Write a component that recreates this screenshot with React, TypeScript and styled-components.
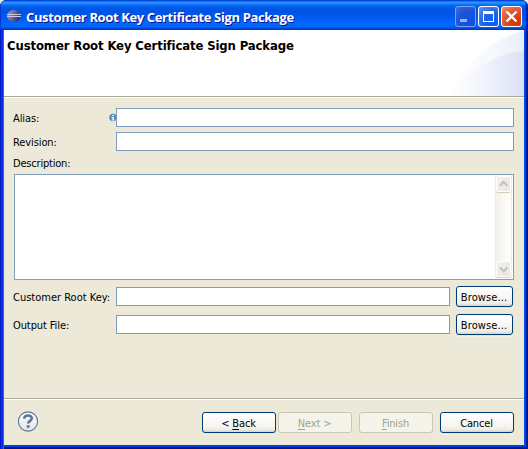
import React from "react";
import styled, { createGlobalStyle } from "styled-components";

const GlobalStyle = createGlobalStyle`
  * { box-sizing: border-box; }
  body { margin: 0; background: #ece9d8; overflow: hidden; }
  button, input, textarea { font: inherit; margin: 0; }
`;

const Window = styled.div`
  display: flex;
  flex-direction: column;
  width: 528px;
  height: 449px;
  padding: 0 4px 4px;
  border-radius: 7px 7px 0 0;
  overflow: hidden;
  background: #0046e0;
  box-shadow: inset 1px 0 #0019cf, inset 3px 0 #0831d9, inset 4px 0 #166aee,
    inset -1px 0 #00138c, inset -2px 0 #001ea0, inset 0 -1px #00138c,
    inset 0 -2px #001ea0, inset 0 -4px #0441d8;
  font: 11px/14px "DejaVu Sans Condensed", "DejaVu Sans", sans-serif;
  font-stretch: condensed;
  color: #000;
`;

const TitleBar = styled.header`
  display: flex;
  flex: none;
  align-items: flex-start;
  height: 30px;
  margin: 0 -4px;
  padding: 6px 6px 0 6px;
  background: linear-gradient(
    #0058ee 0, #0058ee 1px, #3593ff 2px, #288eff 3px, #127dff 4px, #036ffc 5px,
    #0262ee 6px, #0057e5 8px, #0054e3 11px, #0055eb 15px, #005bf5 19px,
    #026afe 23px, #0062fd 27px, #0052dc 28px, #0040c8 30px
  );
  box-shadow: inset 1px 0 #0637d4, inset -2px 0 2px #0019a8;
`;

const TitleText = styled.h1`
  flex: 1;
  margin: 1px 0 0 4px;
  font: bold 13px/20px "Open Sans", "Noto Sans", sans-serif;
  letter-spacing: -0.37px;
  white-space: nowrap;
  color: #fff;
  text-shadow: 1px 1px 0 #0f1089;
`;

const WindowControls = styled.div`
  display: flex;
  gap: 2px;
`;

const ControlButton = styled.button<{ $tone: "dim" | "blue" | "red" }>`
  width: 21px;
  height: 21px;
  padding: 0;
  border: 1px solid ${(p) => (p.$tone === "dim" ? "#7f9eea" : "#fff")};
  border-radius: 3px;
  background: ${(p) =>
    p.$tone === "red"
      ? "radial-gradient(circle at 80% 85%, #d63300, #e04b22 50%, #ef8e73)"
      : p.$tone === "dim"
        ? "radial-gradient(circle at 75% 80%, #0c54e4, #1c52da 55%, #426fdf)"
        : "radial-gradient(circle at 80% 85%, #0560f8, #2362e4 50%, #6494f2)"};
  svg { display: block; }
`;

const Banner = styled.section`
  display: flex;
  flex: none;
  justify-content: space-between;
  height: 68px;
  border-bottom: 1px solid #fff;
  background: #fff;
  box-shadow: inset 0 -1px #aca899;
`;

const BannerTitle = styled.h2`
  margin: 8px 0 0 3px;
  font: bold 13px/16px "DejaVu Sans Condensed", "DejaVu Sans", sans-serif;
  font-stretch: condensed;
  letter-spacing: -0.13px;
  white-space: nowrap;
`;

const Form = styled.main`
  flex: 1;
  padding: 10px 10px 0 9px;
  background: #ece9d8;
`;

const Field = styled.div<{ $height: number }>`
  display: flex;
  align-items: center;
  height: ${(p) => p.$height}px;
`;

const Label = styled.label<{ $spacing?: number }>`
  flex: none;
  width: 103px;
  padding-top: 2px;
  letter-spacing: ${(p) => p.$spacing ?? 0}px;
  white-space: nowrap;
`;

const AliasLabel = styled(Label)`
  display: flex;
  justify-content: space-between;
  svg { flex: none; margin: 1px -1px 0 0; }
`;

const DescriptionLabel = styled(Label)`
  padding: 0 0 3px;
`;

const TextInput = styled.input`
  flex: 1;
  min-width: 0;
  height: 19px;
  padding: 1px 3px;
  border: 1px solid #7f9db9;
  border-radius: 0;
  background: #fff;
  outline: none;
`;

const TextArea = styled.div`
  display: flex;
  justify-content: flex-end;
  height: 106px;
  margin: 0 0 6px 1px;
  padding: 1px;
  border: 1px solid #7f9db9;
  background: #fff;
`;

const ScrollBar = styled.div`
  display: flex;
  flex-direction: column;
  justify-content: space-between;
  width: 17px;
  border: solid #eeede5;
  border-width: 0 1px;
  background: linear-gradient(90deg, #f3f1ec, #fefefb);
`;

const ScrollButton = styled.div`
  height: 16px;
  margin: 0 0 1px;
  border: 1px solid #fff;
  border-radius: 2px;
  background: linear-gradient(135deg, #f3f2ec, #e8e6dc);
  box-shadow: 0 1px #d2cebb;
  svg { display: block; }
`;

const PushButton = styled.button<{ $width: number }>`
  flex: none;
  width: ${(p) => p.$width}px;
  height: 21px;
  padding: 1px 1px 0 0;
  border: 1px solid #003c74;
  border-radius: 3px;
  background: linear-gradient(#fff, #f5f4ee 70%, #ecebe5 88%, #d8d0c4);
  box-shadow: 0 0 0 1px #e9e4d2, 0 1px 0 1px #f3f1e7;
  line-height: 17px;
  letter-spacing: -0.15px;
  color: #000;
  white-space: nowrap;
  &:disabled {
    border-color: #c9c7ba;
    background: #f5f4ea;
    color: #a1a192;
    box-shadow: none;
  }
`;

const BrowseButton = styled(PushButton)`
  margin: 0 1px 0 6px;
  letter-spacing: 0.1px;
`;

const Mnemonic = styled.span`
  text-decoration: underline;
  text-underline-offset: 2px;
  text-decoration-thickness: 1px;
  text-decoration-skip-ink: none;
`;

const Footer = styled.footer`
  display: flex;
  flex: none;
  align-items: flex-start;
  height: 47px;
  padding: 12px 10px 0 13px;
  border-top: 1px solid #aca899;
  background: #ece9d8;
  box-shadow: inset 0 1px #fff;
`;

const Actions = styled.div`
  display: flex;
  gap: 7px;
  margin: 1px 0 0 auto;
`;

const Paging = styled.div`
  display: flex;
  gap: 2px;
`;

const EclipseLogo = () => (
  <svg width="16" height="16" viewBox="0 0 16 16">
    <defs>
      <linearGradient id="planet" x1="0" y1="0" x2="1" y2="0.4">
        <stop offset="0" stopColor="#d29aa6" />
        <stop offset="0.4" stopColor="#7f77a6" />
        <stop offset="1" stopColor="#2f2d80" />
      </linearGradient>
    </defs>
    <ellipse cx="8" cy="10" rx="6.8" ry="6" fill="url(#planet)" />
    <path d="M1 8.5h14M1 10.5h14" stroke="#c9cdec" />
  </svg>
);

const BannerArt = () => (
  <svg width="76" height="66" viewBox="0 0 76 66">
    <defs>
      <linearGradient id="sweep" x1="0" x2="1" y1="0" y2="0">
        <stop offset="0" stopColor="#fff" />
        <stop offset="1" stopColor="#e6ebf8" />
      </linearGradient>
      <linearGradient id="hill" gradientUnits="userSpaceOnUse" x1="0" x2="76" y1="0" y2="0">
        <stop offset="0" stopColor="#fff" />
        <stop offset="0.4" stopColor="#f4f6fc" />
        <stop offset="1" stopColor="#dae1f5" />
      </linearGradient>
    </defs>
    <path d="M0 66C15 38 41 8 76 1v65z" fill="url(#sweep)" opacity="0.65" />
    <path d="M30 42C43 22 56 6 76 1v40z" fill="url(#sweep)" opacity="0.7" />
    <path d="M3 66C17 43 46 23 76 21v45z" fill="url(#hill)" />
  </svg>
);

const InfoIcon = () => (
  <svg width="8" height="9" viewBox="0 0 8 9">
    <circle cx="4" cy="4.5" r="3.8" fill="#528fbd" />
    <path d="M3 2h2v1H3zM2.5 4H5v3H3.5V5h-1zM2.5 6.5h3v1h-3z" fill="#eef5f8" />
  </svg>
);

const HelpIcon = () => (
  <svg width="22" height="22" viewBox="0 0 22 22">
    <defs>
      <linearGradient id="helpFill" x1="0" x2="0" y1="0" y2="1">
        <stop offset="0" stopColor="#fff" />
        <stop offset="1" stopColor="#e2e3e6" />
      </linearGradient>
    </defs>
    <circle cx="11" cy="10.5" r="9.6" fill="url(#helpFill)" stroke="#5e7294" strokeWidth="1.1" />
    <path d="M7.2 7.6C7.3 3.4 14.8 3.5 14.8 7.3c0 2.5-3.6 2.6-3.6 5.2" fill="none" stroke="#60759a" strokeWidth="2.6" />
    <path d="M9.8 14.2h2.8v2.6H9.8z" fill="#60759a" />
  </svg>
);

const Chevron = ({ down = false }: { down?: boolean }) => (
  <svg width="13" height="14" viewBox="0 0 13 14">
    <path
      d={down ? "M3 5.5l3.7 3.7 3.7-3.7" : "M3 8.7L6.7 5l3.7 3.7"}
      fill="none"
      stroke="#c5c3bb"
      strokeWidth="2.3"
    />
  </svg>
);

export default function App() {
  return (
    <>
      <GlobalStyle />
      <Window>
        <TitleBar>
          <EclipseLogo />
          <TitleText>Customer Root Key Certificate Sign Package</TitleText>
          <WindowControls>
            <ControlButton $tone="dim" aria-label="Minimize">
              <svg width="19" height="19" viewBox="0 0 19 19"><path d="M4 12h7v3H4z" fill="#9aafee" /></svg>
            </ControlButton>
            <ControlButton $tone="blue" aria-label="Maximize">
              <svg width="19" height="19" viewBox="0 0 19 19"><path d="M4 4h11v11H4zM5 7v7h9V7z" fill="#fff" fillRule="evenodd" /></svg>
            </ControlButton>
            <ControlButton $tone="red" aria-label="Close">
              <svg width="19" height="19" viewBox="0 0 19 19"><path d="M4.5 4.5l10 10M14.5 4.5l-10 10" stroke="#fff" strokeWidth="2.3" /></svg>
            </ControlButton>
          </WindowControls>
        </TitleBar>
        <Banner>
          <BannerTitle>Customer Root Key Certificate Sign Package</BannerTitle>
          <BannerArt />
        </Banner>
        <Form>
          <Field $height={19}>
            <AliasLabel htmlFor="alias" $spacing={-0.1}>Alias:<InfoIcon /></AliasLabel>
            <TextInput id="alias" />
          </Field>
          <Field $height={29}>
            <Label htmlFor="revision" $spacing={-0.1}>Revision:</Label>
            <TextInput id="revision" />
          </Field>
          <Field $height={18}>
            <DescriptionLabel $spacing={-0.2}>Description:</DescriptionLabel>
          </Field>
          <TextArea>
            <ScrollBar>
              <ScrollButton><Chevron /></ScrollButton>
              <ScrollButton><Chevron down /></ScrollButton>
            </ScrollBar>
          </TextArea>
          <Field $height={21}>
            <Label htmlFor="rootKey">Customer Root Key:</Label>
            <TextInput id="rootKey" />
            <BrowseButton $width={57}>Browse...</BrowseButton>
          </Field>
          <Field $height={35}>
            <Label htmlFor="output" $spacing={-0.1}>Output File:</Label>
            <TextInput id="output" />
            <BrowseButton $width={57}>Browse...</BrowseButton>
          </Field>
        </Form>
        <Footer>
          <HelpIcon />
          <Actions>
            <Paging>
              <PushButton $width={74}>&lt; <Mnemonic>B</Mnemonic>ack</PushButton>
              <PushButton $width={74} disabled><Mnemonic>N</Mnemonic>ext &gt;</PushButton>
            </Paging>
            <PushButton $width={74} disabled><Mnemonic>F</Mnemonic>inish</PushButton>
            <PushButton $width={74}>Cancel</PushButton>
          </Actions>
        </Footer>
      </Window>
    </>
  );
}
